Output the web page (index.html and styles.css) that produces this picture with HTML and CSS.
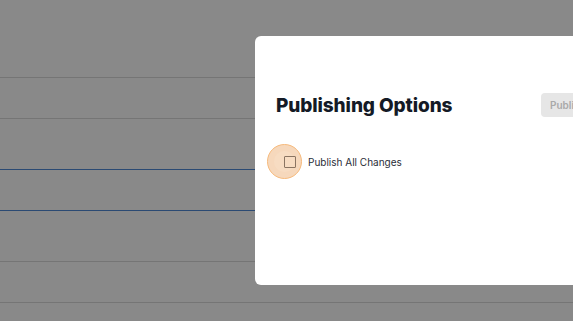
FILE: index.html
```html
<!DOCTYPE html>
<html lang="en">
<head>
    <meta charset="UTF-8">
    <meta name="viewport" content="width=device-width, initial-scale=1.0">
    <title>Publishing Options</title>
    <link rel="stylesheet" href="styles.css">
</head>
<body>
    <div class="page">
        <div class="list">
            <div class="row row-top"></div>
            <div class="row"></div>
            <div class="row tall above-selected"></div>
            <div class="row selected"></div>
            <div class="row tall"></div>
            <div class="row"></div>
            <div class="row"></div>
        </div>
    </div>

    <div class="modal">
        <div class="modal-header">
            <h1>Publishing Options</h1>
            <button class="publish-button" disabled>Publish</button>
        </div>
        <label class="option">
            <span class="check-wrap">
                <span class="halo"></span>
                <span class="checkbox"></span>
            </span>
            <span class="option-text">Publish All Changes</span>
        </label>
    </div>
</body>
</html>
```

FILE: styles.css
```css
body {
    margin: 0;
    padding: 0;
    font-family: 'Inter', 'Liberation Sans', sans-serif;
    background: #898989;
    height: 321px;
    overflow: hidden;
}

.page {
    width: 100%;
}

.list {
    display: flex;
    flex-direction: column;
}

.row {
    height: 40px;
    border-bottom: 1px solid #757575;
}

.row-top {
    height: 77px;
}

.row.tall {
    height: 50px;
}

.row.above-selected,
.row.selected {
    border-bottom-color: #2b4a73;
}

.modal {
    position: absolute;
    top: 36px;
    left: 255px;
    width: 420px;
    height: 249px;
    background: #fff;
    border-radius: 6px;
    box-sizing: border-box;
    padding: 56px 21px 0 21px;
    overflow: hidden;
}

.modal-header {
    display: flex;
    align-items: center;
    justify-content: space-between;
    height: 26px;
}

h1 {
    margin: 0;
    font-size: 19px;
    font-weight: 800;
    color: #141a26;
    letter-spacing: -0.1px;
}

.publish-button {
    width: 110px;
    height: 24px;
    margin-right: 3px;
    border: none;
    border-radius: 4px;
    background: #e6e6e6;
    color: #a9a9a9;
    font-family: inherit;
    font-size: 10px;
    font-weight: 600;
    text-align: left;
    padding: 0 9px;
}

.option {
    display: flex;
    align-items: center;
    gap: 12px;
    margin-top: 37px;
    margin-left: 7px;
}

.check-wrap {
    position: relative;
    width: 14px;
    height: 14px;
    display: flex;
    align-items: center;
    justify-content: center;
}

.halo {
    position: absolute;
    left: -16px;
    top: -11px;
    width: 33px;
    height: 33px;
    border-radius: 50%;
    background: #f7dcc2;
    border: 1.5px solid #f6b97b;
    box-shadow: inset 0 0 0 6px #f6d8bc;
}

.checkbox {
    position: relative;
    width: 10px;
    height: 10px;
    border: 1.5px solid #8a7462;
    border-radius: 1px;
}

.option-text {
    font-size: 10px;
    color: #2a2d38;
    margin-left: -1px;
}
```
